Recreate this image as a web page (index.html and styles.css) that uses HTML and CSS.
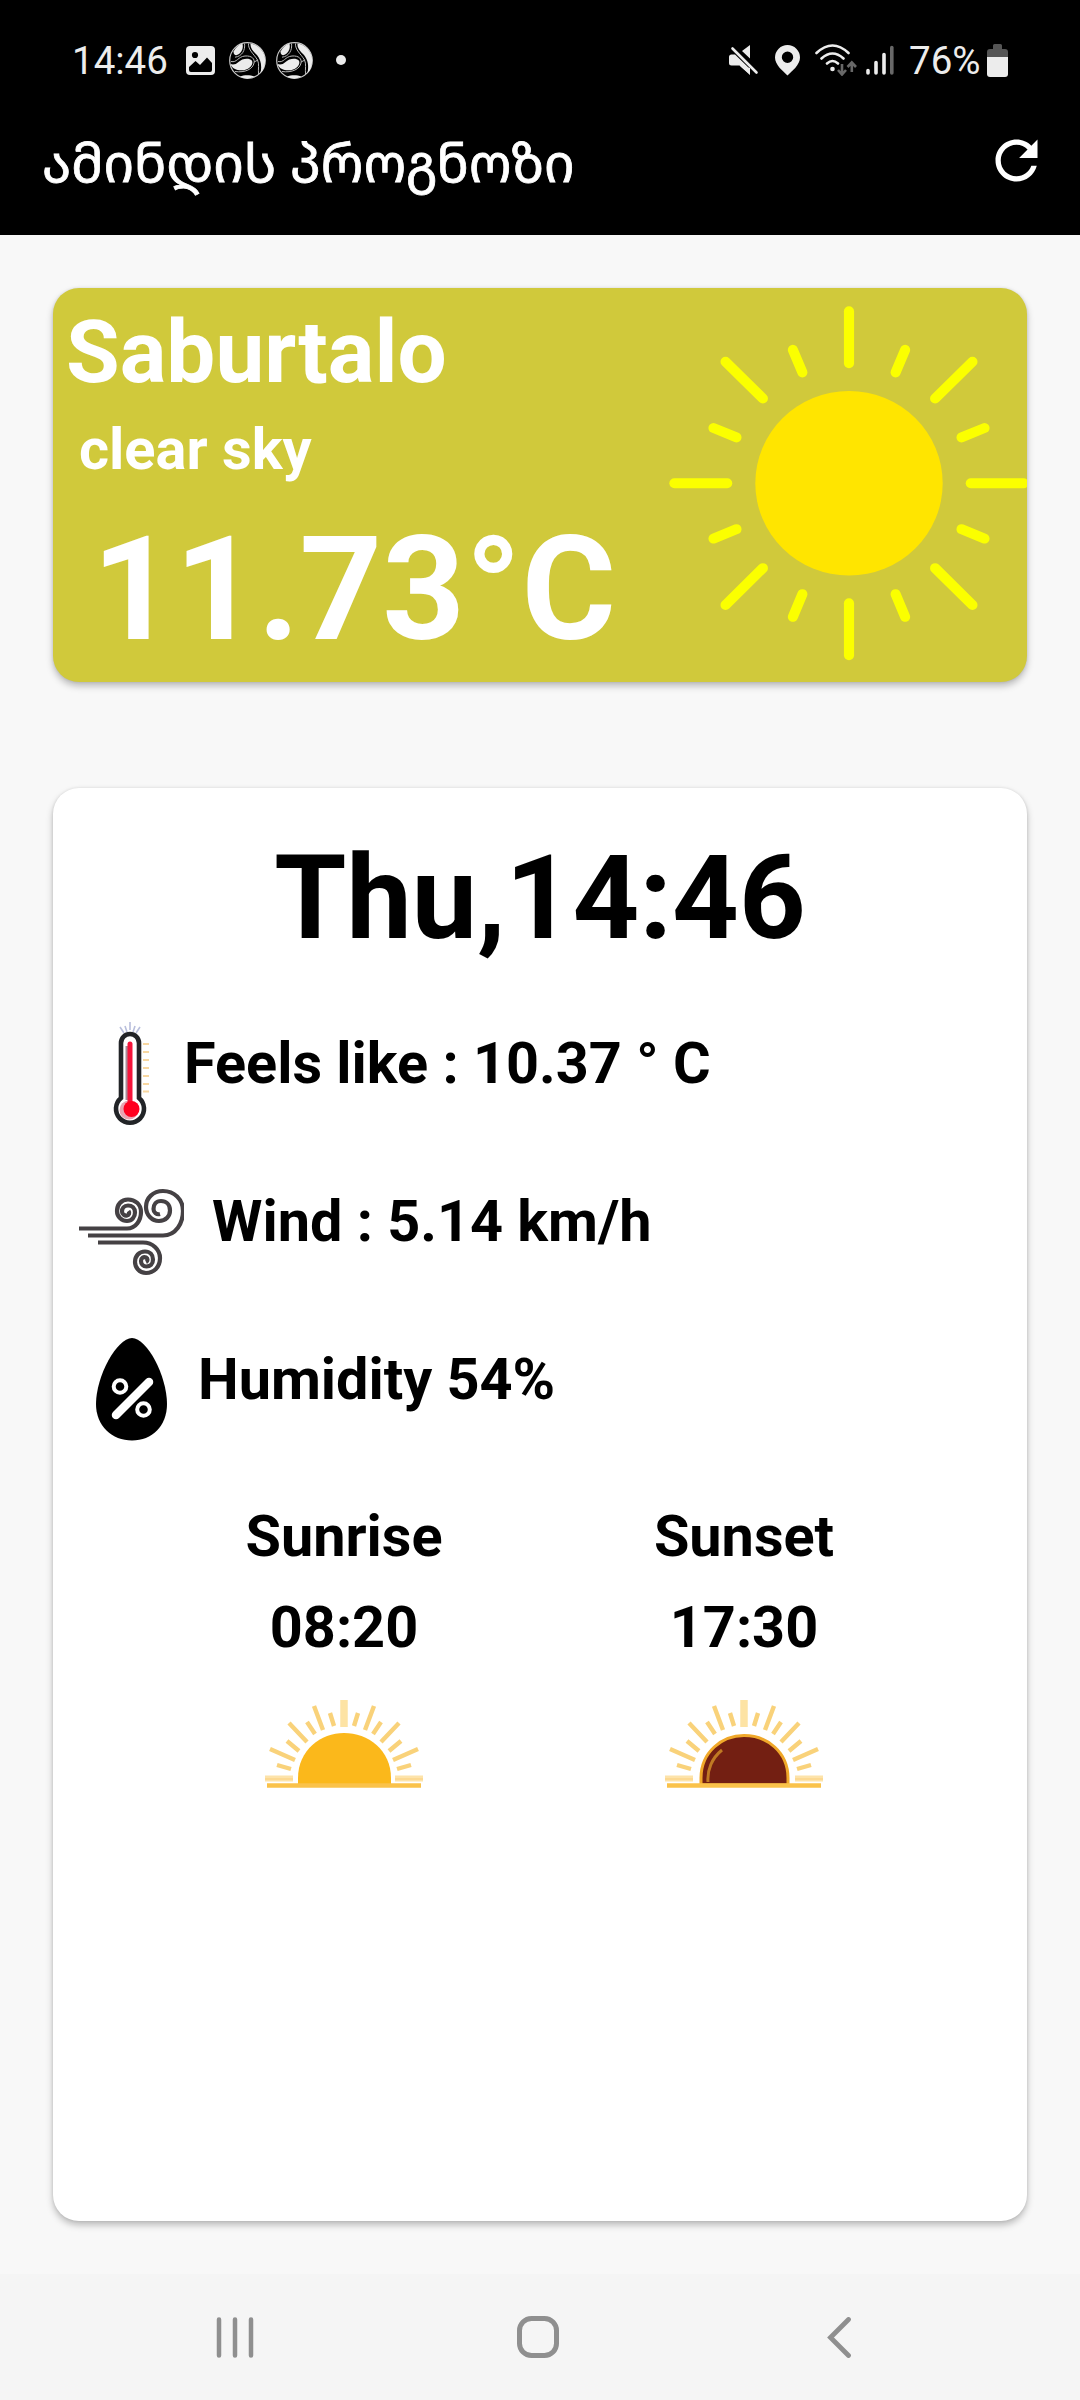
FILE: index.html
```html
<!DOCTYPE html>
<html lang="ka">
<head>
<meta charset="utf-8">
<title>ამინდის პროგნოზი</title>
<link rel="stylesheet" href="styles.css">
</head>
<body>
<svg class="defs" width="0" height="0">
  <defs>
    <g id="ball">
      <circle cx="18.5" cy="18.5" r="17.8" fill="#000" stroke="#c8c8c8" stroke-width="1.200"/>
      <g fill="#ececec">
        <path d="M4.500 9.500C7 5 10 2.500 13.500 1.800C14.500 6 13 9.500 10 12C7.500 14 4.500 13.500 4.500 9.500Z"/>
        <path d="M21.500 1.500C30 3 36 10 36.200 18C36.200 23 34.500 28 31.500 31C33 24 32 18 28 13C24 9 21 6 21.500 1.500Z"/>
        <path d="M1.500 22C4 23 7 22.500 9.500 20C13 16.500 20 15.500 22.800 18.500C25 22 21 27 15 28.200C9 29 3 27 1.500 22Z"/>
        <path d="M11 34.800C15 32.800 21 33 25.500 34.500Q18 38.500 11 34.800Z"/>
      </g>
      <g fill="none" stroke="#b8b8b8" stroke-width="1">
        <path d="M15.500 1.500C16.500 8 13 14.500 6 15.200M19.500 1.500C19 8 25 12 28.500 18C30.500 22 29 27 29.500 32M2 19.500C8 21 9 14.500 16 14C23 13.500 26 17 25 21C24 27 16 31 6 29.500M25 20L29 18"/>
      </g>
    </g>
    <g id="rays">
      <path d="M79 0V27" stroke="#fde3a4" stroke-width="7.500"/>
      <g stroke="#f9d27a" stroke-width="4.400" fill="none">
        <path d="M49 6L58 30M109 6L100 30M65 13L69 26M93 13L89 26M24 23L42 42M134 23L116 42M42 22L50 34M116 22L108 34M22 41L34 51M136 41L124 51M5 49L30 60M153 49L128 60M12 65L26 69M146 65L132 69"/>
      </g>
      <path d="M0 78.500H28M130 78.500H158" stroke="#fde3aa" stroke-width="6"/>
      <path d="M0 79H28M130 79H158" stroke="#fbd68a" stroke-width="1.500"/>
    </g>
  </defs>
</svg>

<div class="status">
  <span class="clock">14:46</span>
  <svg class="s-image" width="29" height="29" viewBox="0 0 29 29"><rect width="29" height="29" rx="4" fill="#ececec"/><circle cx="9" cy="9" r="3.1"/><path d="M3 21L9.500 15L14 19L21 11.500L26 17V24Q26 26 24 26H5Q3 26 3 24Z"/></svg>
  <svg class="s-ball" width="37" height="37"><use href="#ball"/></svg>
  <svg class="s-ball2" width="37" height="37"><use href="#ball"/></svg>
  <span class="dot"></span>
  <span class="grow"></span>
  <svg class="s-mute" width="30" height="30" viewBox="0 0 30 30"><path d="M13 6L21 0V13.500ZM21 23V30L11 21Z" fill="#ececec"/><path d="M0 18V12Q0 9.500 2.500 9.500H6L21 24V29.500L10.500 20.500H2.500Q0 20.500 0 18Z" fill="#ececec"/><path d="M3.500 3.500L27.500 27.500" stroke="#ececec" stroke-width="2.600" stroke-linecap="round"/></svg>
  <svg class="s-pin" width="25" height="31" viewBox="0 0 25 31"><path fill-rule="evenodd" d="M12.500 0A12.500 12.500 0 0 1 25 12.500C25 20 17 26 12.500 30.500C8 26 0 20 0 12.500A12.500 12.500 0 0 1 12.500 0ZM12.500 6.500A5.700 5.700 0 1 0 12.500 17.900A5.700 5.700 0 1 0 12.500 6.500Z" fill="#ececec"/></svg>
  <svg class="s-wifi" width="42" height="32" viewBox="0 0 42 32"><g fill="none" stroke="#ececec" stroke-width="2.600" stroke-linecap="round"><path d="M1.500 9Q17.500 -6 33.500 9M6.500 14.500Q17.500 4.500 28.500 14.500M12 19.500Q17.500 14.500 23 19.500"/></g><circle cx="17.500" cy="25" r="2.300" fill="#ececec"/><g fill="none" stroke="#686868" stroke-width="2.600"><path d="M27 20V30M23 26L27 30.500L31 26M36.800 28V19M32.500 23L36.800 18.500L41 23"/></g></svg>
  <svg class="s-bars" width="28" height="30" viewBox="0 0 28 30"><g stroke="#ececec" stroke-width="3.600" stroke-linecap="round"><path d="M2 25.500V28M10 17.500V28M18 9.500V28"/><path d="M25.800 2.500V28" stroke="#686868"/></g></svg>
  <span class="pct">76%</span>
  <svg class="s-batt" width="21" height="33" viewBox="0 0 21 33"><path d="M6 5V1.500Q6 0 7.500 0H13.500Q15 0 15 1.500V5H18Q21 5 21 8V13H0V8Q0 5 3 5Z" fill="#555"/><path d="M0 13H21V30Q21 33 18 33H3Q0 33 0 30Z" fill="#ececec"/></svg>
</div>

<header class="appbar">
  <h1 class="title">ამინდის პროგნოზი</h1>
  <svg class="refresh" width="63" height="63" viewBox="0 0 24 24"><path fill="#fff" d="M17.650 6.350C16.200 4.900 14.210 4 12 4c-4.420 0-7.990 3.580-7.990 8s3.570 8 7.990 8c3.730 0 6.840-2.550 7.730-6h-2.080c-.820 2.330-3.040 4-5.650 4-3.310 0-6-2.690-6-6s2.690-6 6-6c1.660 0 3.140.690 4.220 1.780L13 11h7V4l-2.350 2.350z"/></svg>
</header>

<main class="content">
  <section class="card now">
    <div class="now-text">
      <div class="city">Saburtalo</div>
      <div class="sky">clear sky</div>
      <div class="temp">11.73°C</div>
    </div>
    <svg class="sun" width="360" height="394" viewBox="-180 -195.300 360 394">
      <g transform="scale(1.015 1)">
        <circle r="92.300" fill="#ffe500"/>
        <g stroke="#fbff00" stroke-width="10" stroke-linecap="round">
          <path id="ray" d="M0 -120V-172"/>
          <use href="#ray" transform="rotate(45)"/><use href="#ray" transform="rotate(90)"/><use href="#ray" transform="rotate(135)"/><use href="#ray" transform="rotate(180)"/><use href="#ray" transform="rotate(225)"/><use href="#ray" transform="rotate(270)"/><use href="#ray" transform="rotate(315)"/>
          <path id="sray" d="M0 -120V-144.500" transform="rotate(22.500)"/>
          <use href="#sray" transform="rotate(45)"/><use href="#sray" transform="rotate(90)"/><use href="#sray" transform="rotate(135)"/><use href="#sray" transform="rotate(180)"/><use href="#sray" transform="rotate(225)"/><use href="#sray" transform="rotate(270)"/><use href="#sray" transform="rotate(315)"/>
        </g>
      </g>
    </svg>
  </section>

  <section class="card details">
    <div class="day">Thu,14:46</div>
    <div class="row feels">
      <svg width="105" height="105" viewBox="0 0 105 105">
        <path d="M51 0V8M46 4L48 10M56 4L54 10M41 5L45 11M61 5L57 11" stroke="#b9bfdc" stroke-width="1.600"/>
        <path d="M42 21A9 9 0 0 1 60 21V76A14 14 0 1 1 42 76Z" fill="#fff" stroke="#222427" stroke-width="4.600"/>
        <path d="M48.500 24V78" stroke="#a78c98" stroke-width="4"/>
        <circle cx="50" cy="88" r="9.500" fill="#e8a3b2"/>
        <path d="M51 22V84" stroke="#f5143a" stroke-width="5" stroke-linecap="round"/>
        <circle cx="52.500" cy="87" r="8" fill="#ff0020"/>
        <path d="M64 22H70M64 30H70M64 38H70M64 46H70M64 54H70M64 62H70M64 69.500H70" stroke="#f8d7a0" stroke-width="2"/>
      </svg>
      <span>Feels like : 10.37 ° C</span>
    </div>
    <div class="row wind">
      <svg width="105" height="105" viewBox="0 0 105 105">
        <g fill="none" stroke="#454144" stroke-width="4.200">
          <path d="M0 48.500H48C57 48.500 62 40 62 32C62 24 56 19.500 49 19.500C42 19.500 38 25 38 31C38 37 43 41 48 41C53 41 56 37 56 32.500C56 28 53 25.500 49 25.500C45 25.500 43 28.500 43 31.500C43 34.500 46 36 48 35.500C50 35 51 33 49.500 31"/>
          <path d="M9 55.500H84C97 55.500 104 43 104 31C104 19 95 11 84 11C74 11 67 18 67 27C67 35 73 41 80 41C87 41 91 36 91 30.500C91 24.500 87 21 82 21C77 21 74.500 24.500 74.500 29C74.500 32.500 77.500 35 81 34"/>
          <path d="M19 62.500H64C74 62.500 81 70 81 78C81 87 75 93 67 93C60 93 56 87 56 82C56 76 60 71.500 66 71.500C71 71.500 74 75 74 79.500C74 84 71 86.500 67.500 86.500C64 86.500 62 84 62 81C62 78 64.500 76.500 67 77.500C69 78.500 69 81 67 82"/>
        </g>
      </svg>
      <span>Wind : 5.14 km/h</span>
    </div>
    <div class="row humid">
      <svg width="105" height="105" viewBox="0 0 105 105">
        <path d="M53 0C68 0 88 38 88 66C88 88 73 102.500 53 102.500C33 102.500 17 88 17 66C17 38 38 0 53 0Z"/>
        <g fill="none" stroke="#fff"><path d="M37 77L70 44" stroke-width="8.500" stroke-linecap="round"/><circle cx="41" cy="48.500" r="6.300" stroke-width="4"/><circle cx="64.500" cy="71.500" r="6.300" stroke-width="4"/></g>
      </svg>
      <span>Humidity 54%</span>
    </div>
    <div class="suns">
      <div class="suncol">
        <span>Sunrise</span>
        <span>08:20</span>
        <svg width="158" height="90" viewBox="0 0 158 90"><use href="#rays"/><path d="M33 86V78C33 50 56 33 79 33C103 33 126 50 126 78V86Z" fill="#fbb81b"/><path d="M2 85.500H156" stroke="#fac24a" stroke-width="4.500"/></svg>
      </div>
      <div class="suncol">
        <span>Sunset</span>
        <span>17:30</span>
        <svg width="158" height="90" viewBox="0 0 158 90"><use href="#rays"/><path d="M36 85V78C36 52 57 35.500 79 35.500C102 35.500 123 52 123 78V85Z" fill="#731f12" stroke="#f0a82a" stroke-width="3"/><path d="M43 82C42 70 47 58 57 50" fill="none" stroke="#c07a24" stroke-width="3"/><path d="M2 85.500H156" stroke="#fac24a" stroke-width="4.500"/></svg>
      </div>
    </div>
  </section>
</main>

<nav class="nav">
  <svg width="38" height="41" viewBox="0 0 38 41"><path d="M3 2.500V38.500M19 2.500V38.500M35 2.500V38.500" stroke="#8f8f8f" stroke-width="4.500" stroke-linecap="round"/></svg>
  <svg class="home" width="42" height="42" viewBox="0 0 42 42"><rect x="2.500" y="2.500" width="37" height="37" rx="12" fill="none" stroke="#8f8f8f" stroke-width="5"/></svg>
  <svg width="25" height="41" viewBox="0 0 25 41"><path d="M21.500 2.500L3.500 20.500L21.500 38.500" fill="none" stroke="#8f8f8f" stroke-width="4.800" stroke-linecap="round"/></svg>
</nav>
</body>
</html>
```
FILE: styles.css
```css
* { box-sizing: border-box; }
body {
  margin: 0;
  width: 1080px;
  height: 2400px;
  display: flex;
  flex-direction: column;
  background: #f8f8f8;
  font-family: Roboto, sans-serif;
  color: #000;
}
svg { display: block; flex: none; }
.defs { display: none; }

.status {
  height: 120px;
  padding: 0 72px 0 72px;
  display: flex;
  align-items: center;
  background: #000;
  color: #ececec;
  font-size: 38.500px;
}
.clock { width: 114px; }
.s-ball { margin-left: 14px; }
.s-ball2 { margin-left: 10px; }
.dot { width: 10px; height: 10px; margin-left: 23px; border-radius: 50%; background: #ececec; }
.grow { flex: 1; }
.s-pin { margin-left: 16px; }
.s-wifi { margin-left: 15px; }
.s-bars { margin-left: 9px; }
.pct { width: 78px; margin-left: 15px; }

.appbar {
  height: 115px;
  padding: 9px 32px 0 42px;
  display: flex;
  align-items: flex-start;
  justify-content: space-between;
  background: #000;
}
.title {
  margin: 1px 0 0;
  color: #fff;
  font: 400 53.300px/64px "Noto Sans Georgian", "Noto Sans", "DejaVu Sans", sans-serif;
  -webkit-text-stroke: .8px #fff;
  white-space: nowrap;
}

.content { height: 2039px; padding: 53px; display: flex; flex-direction: column; gap: 106px; }
.card { border-radius: 26px; background: #fff; box-shadow: 0 4px 7px rgba(0, 0, 0, .25), 0 0 3px rgba(0, 0, 0, .1); }

.now {
  height: 394px;
  display: flex;
  justify-content: space-between;
  overflow: hidden;
  background: #d0c93b;
  color: #fff;
  font-weight: 700;
}
.now-text { padding-left: 13px; white-space: nowrap; }
.city { margin-top: 12px; font-size: 87.200px; line-height: 104px; }
.sky { margin-top: 11px; padding-left: 13px; font-size: 57.750px; line-height: 68px; }
.temp { margin-top: 22px; padding-left: 26px; font-size: 144.400px; line-height: 170px; }
.sun { margin-right: -2px; }

.details { height: 1433px; display: flex; flex-direction: column; font-weight: 700; font-size: 57.600px; line-height: 68px; }
.day { margin: 42px 0 0; text-align: center; font-size: 116.500px; line-height: 136px; }
.row { height: 158px; padding-left: 26px; display: flex; align-items: flex-start; white-space: nowrap; }
.feels { margin-top: 56px; }
.wind span { margin-left: 28px; }
.humid span { margin-left: 14px; }
.row span { margin-top: 8px; }
.suns { margin-top: 7px; display: flex; padding-left: 191px; gap: 200px; }
.suncol { width: 200px; display: flex; flex-direction: column; align-items: center; }
.suncol span { height: 91px; }
.suncol svg { margin-top: 15px; }

.nav { height: 126px; padding: 0 228px 0 216px; display: flex; align-items: center; justify-content: space-between; background: #f5f5f5; }
.home { margin-right: 5px; }
```
